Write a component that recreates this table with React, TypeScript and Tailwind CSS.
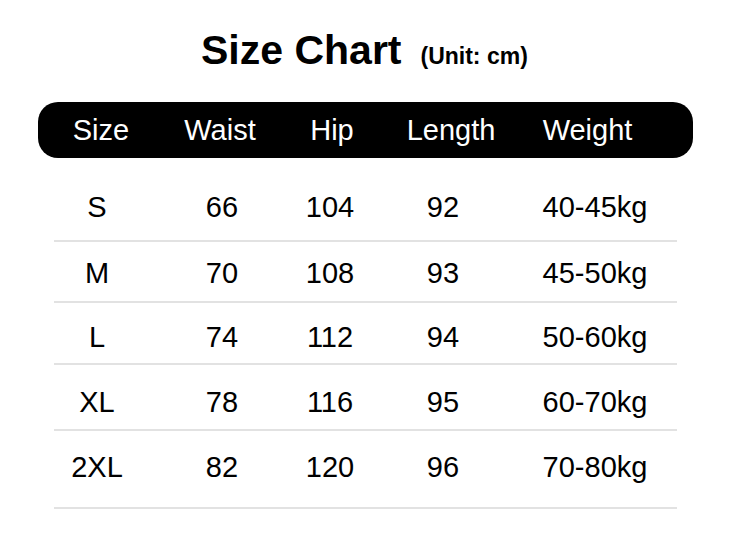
const headers = ["Size", "Waist", "Hip", "Length", "Weight"];

const rows = [
  { cells: ["S", "66", "104", "92", "40-45kg"], pad: "pt-[34px] pb-[18px]" },
  { cells: ["M", "70", "108", "93", "45-50kg"], pad: "pt-[16px] pb-[13px]" },
  { cells: ["L", "74", "112", "94", "50-60kg"], pad: "pt-[19px] pb-[11px]" },
  { cells: ["XL", "78", "116", "95", "60-70kg"], pad: "pt-[22px] pb-[12px]" },
  { cells: ["2XL", "82", "120", "96", "70-80kg"], pad: "pt-[21px] pb-[25px]" },
];

const App = () => {
  return (
    <div className="w-[750px] h-[543px] overflow-hidden bg-white font-['Liberation_Sans',Arial,sans-serif] text-black">
      <div className="flex items-baseline pt-[30px] pl-[201px]">
        <h1 className="text-[41px] leading-none font-bold">Size Chart</h1>
        <span className="ml-[19px] text-[23px] leading-none font-bold">(Unit: cm)</span>
      </div>

      <div className="mt-[31px] ml-[38px] w-[655px] h-[56px] rounded-[20px] bg-black grid grid-cols-[126px_112px_112px_126px_147px] items-center">
        {headers.map((h) => (
          <div key={h} className="text-center text-white text-[29px] leading-[30px]">
            {h}
          </div>
        ))}
      </div>

      <div className="ml-[54px] w-[623px]">
        {rows.map((r) => (
          <div
            key={r.cells[0]}
            className={`grid grid-cols-[86px_164px_52px_174px_130px] border-b-2 border-[#e2e2e2] ${r.pad}`}
          >
            {r.cells.map((c, i) => (
              <div key={i} className="text-center text-[29px] leading-[30px] whitespace-nowrap">
                {c}
              </div>
            ))}
          </div>
        ))}
      </div>
    </div>
  );
};

export default App;
